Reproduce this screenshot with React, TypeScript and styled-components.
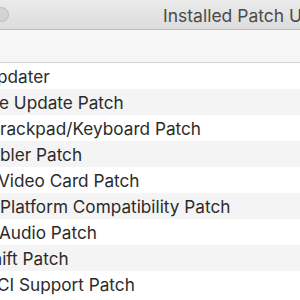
import React from "react";
import styled, { createGlobalStyle } from "styled-components";

const GlobalStyle = createGlobalStyle`
  html, body {
    margin: 0;
    padding: 0;
    background: #ffffff;
    overflow: hidden;
  }
`;

const Window = styled.div`
  width: 300px;
  height: 300px;
  display: flex;
  flex-direction: column;
  overflow: hidden;
  font-family: Inter, "Liberation Sans", sans-serif;
  background: #ffffff;
`;

const TitleBar = styled.div`
  height: 29px;
  flex: none;
  display: flex;
  align-items: center;
  background: linear-gradient(#ebebeb, #dcdcdc);
  border-bottom: 1px solid #bdbdbd;
  overflow: hidden;
`;

const Light = styled.span`
  width: 13px;
  height: 13px;
  flex: none;
  margin-left: -6px;
  border-radius: 50%;
  background: #d3d3d3;
  border: 1px solid #bcbcbc;
`;

const Title = styled.span`
  margin-left: 154px;
  padding-top: 2px;
  font-size: 17.5px;
  color: #4b4b4b;
  white-space: nowrap;
`;

const Header = styled.div`
  height: 32px;
  flex: none;
  background: #f6f6f6;
  border-bottom: 1px solid #d2d2d2;
`;

const List = styled.div`
  display: flex;
  flex-direction: column;
`;

const Row = styled.div<{ $striped: boolean }>`
  height: 26px;
  flex: none;
  display: flex;
  align-items: center;
  background: ${(p) => (p.$striped ? "#f4f4f5" : "#ffffff")};
  overflow: hidden;
`;

const Label = styled.span<{ $shift: number }>`
  margin-left: ${(p) => p.$shift}px;
  font-size: 17.2px;
  color: #2b2b2b;
  white-space: nowrap;
`;

const items: { text: string; shift: number }[] = [
  { text: "pdater", shift: -3 },
  { text: "e Update Patch", shift: -1 },
  { text: "rackpad/Keyboard Patch", shift: 0 },
  { text: "bler Patch", shift: 0 },
  { text: "Video Card Patch", shift: -2 },
  { text: "Platform Compatibility Patch", shift: 0 },
  { text: "Audio Patch", shift: -1 },
  { text: "hift Patch", shift: -8 },
  { text: "CI Support Patch", shift: -3 },
];

export default function App() {
  return (
    <>
      <GlobalStyle />
      <Window>
        <TitleBar>
          <Light />
          <Title>Installed Patch Updates</Title>
        </TitleBar>
        <Header />
        <List>
          {items.map((item, i) => (
            <Row key={item.text} $striped={i % 2 === 1}>
              <Label $shift={item.shift}>{item.text}</Label>
            </Row>
          ))}
        </List>
      </Window>
    </>
  );
}
